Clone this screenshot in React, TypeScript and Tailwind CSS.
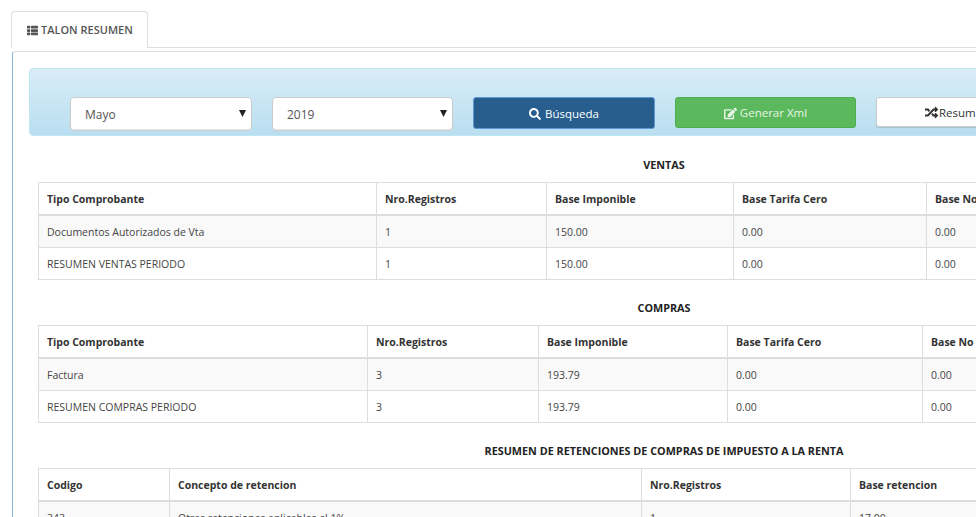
import React from 'react';
import { FaThList, FaSearch, FaEdit, FaRandom } from 'react-icons/fa';

type TableData = {
  title: string;
  widths: string[];
  head: string[];
  rows: string[][];
};

const TABLES: TableData[] = [
  {
    title: 'VENTAS',
    widths: ['w-[338px]', 'w-[170px]', 'w-[187px]', 'w-[193px]', 'w-[364px]'],
    head: ['Tipo Comprobante', 'Nro.Registros', 'Base Imponible', 'Base Tarifa Cero', 'Base No'],
    rows: [
      ['Documentos Autorizados de Vta', '1', '150.00', '0.00', '0.00'],
      ['RESUMEN VENTAS PERIODO', '1', '150.00', '0.00', '0.00'],
    ],
  },
  {
    title: 'COMPRAS',
    widths: ['w-[329px]', 'w-[171px]', 'w-[189px]', 'w-[195px]', 'w-[368px]'],
    head: ['Tipo Comprobante', 'Nro.Registros', 'Base Imponible', 'Base Tarifa Cero', 'Base No'],
    rows: [
      ['Factura', '3', '193.79', '0.00', '0.00'],
      ['RESUMEN COMPRAS PERIODO', '3', '193.79', '0.00', '0.00'],
    ],
  },
  {
    title: 'RESUMEN DE RETENCIONES DE COMPRAS DE IMPUESTO A LA RENTA',
    widths: ['w-[131px]', 'w-[472px]', 'w-[209px]', 'w-[440px]'],
    head: ['Codigo', 'Concepto de retencion', 'Nro.Registros', 'Base retencion'],
    rows: [['343', 'Otras retenciones aplicables el 1%', '1', '17.00']],
  },
];

const SelectBox = ({ value, options, width }: { value: string; options: string[]; width: string }) => (
  <div className={`relative h-[34px] ${width}`}>
    <select
      defaultValue={value}
      className="h-full w-full appearance-none rounded-[4px] border border-[#ccc] bg-white pl-[14px] pt-[2px] text-[12px] text-[#555] shadow-[inset_0_-1px_1px_rgba(0,0,0,0.1)]"
    >
      {options.map(o => (
        <option key={o}>{o}</option>
      ))}
    </select>
    <svg className="pointer-events-none absolute right-[6px] top-[12px]" width="7" height="8" viewBox="0 0 7 8">
      <path d="M0 1h7L3.5 8z" fill="#222" />
    </svg>
  </div>
);

const ResumenTable = ({ data, first }: { data: TableData; first: boolean }) => (
  <>
    <h4 className={`${first ? 'mt-[12px]' : 'mt-[11px]'} flex h-[34px] items-center justify-center text-[10.8px] font-bold text-[#222]`}>{data.title}</h4>
    <table className="w-[1252px] table-fixed border-collapse border border-[#ddd] text-[10.5px] text-[#444]">
      <thead>
        <tr>
          {data.head.map((h, i) => (
            <th key={h} className={`${data.widths[i]} h-[32px] border border-b-2 border-[#ddd] px-2 pt-[3px] text-left font-bold text-[#333]`}>
              {h}
            </th>
          ))}
        </tr>
      </thead>
      <tbody>
        {data.rows.map((row, r) => (
          <tr key={r} className={r % 2 === 0 ? 'bg-[#f9f9f9]' : 'bg-white'}>
            {row.map((cell, i) => (
              <td key={i} className={`${r === 0 ? 'h-[33px] pt-[4px]' : 'h-[32px] pt-[2px]'} border border-[#ddd] px-2`}>
                {cell}
              </td>
            ))}
          </tr>
        ))}
      </tbody>
    </table>
  </>
);

const App: React.FC = () => {
  return (
    <div className="h-[517px] w-[976px] overflow-hidden bg-white font-['Open_Sans','Noto_Sans',sans-serif]">
      {/* Tabs */}
      <div className="h-[48px] pl-[11px] pt-[11px]">
        <div className="border-b border-[#ddd]">
          <div className="relative -mb-[1px] flex h-[37px] w-[137px] items-center gap-[3px] rounded-t-[4px] border border-b-0 border-[#ddd] bg-white pl-[15px] text-[11px] font-semibold text-[#555]">
            <FaThList className="text-[11px]" />
            TALON RESUMEN
          </div>
        </div>
      </div>

      {/* Panel */}
      <div className="ml-[12px] mt-[3px] h-[466px] w-[1400px] rounded-tl-[3px] border-l border-t border-l-[#8db6d6] border-t-[#ddd] pl-[16px] pt-[16px]">
        <div className="flex h-[68px] w-[1300px] items-start gap-[20px] rounded-[4px] border border-[#bce8f1] bg-gradient-to-b from-[#d9edf7] to-[#b9def0] pl-[40px] pt-[28px]">
          <SelectBox value="Mayo" options={['Abril', 'Mayo', 'Junio']} width="w-[182px]" />
          <SelectBox value="2019" options={['2018', '2019', '2020']} width="w-[181px]" />
          <button className="flex h-[32px] w-[182px] items-center justify-center gap-[4px] rounded-[3px] border border-[#5b9bd5] bg-[#285e8e] pt-[1px] text-[11.5px] text-white">
            <FaSearch className="text-[12px]" />
            Búsqueda
          </button>
          <button className="flex h-[31px] w-[181px] items-center justify-center gap-[3px] rounded-[3px] border border-[#4cae4c] bg-[#5cb85c] pt-[1px] text-[11.5px] text-white/85">
            <FaEdit className="text-[13px]" />
            Generar Xml
          </button>
          <button className="flex h-[30px] w-[181px] items-center gap-[1px] rounded-[3px] border border-[#ccc] bg-white pl-[48px] pt-[1px] text-[11.5px] text-[#333] shadow-[0_1px_1px_rgba(0,0,0,0.15)]">
            <FaRandom className="text-[13px]" />
            Resumen
          </button>
        </div>

        <div className="ml-[9px] w-[1252px]">
          {TABLES.map((t, i) => (
            <ResumenTable key={t.title} data={t} first={i === 0} />
          ))}
        </div>
      </div>
    </div>
  );
};

export default App;
